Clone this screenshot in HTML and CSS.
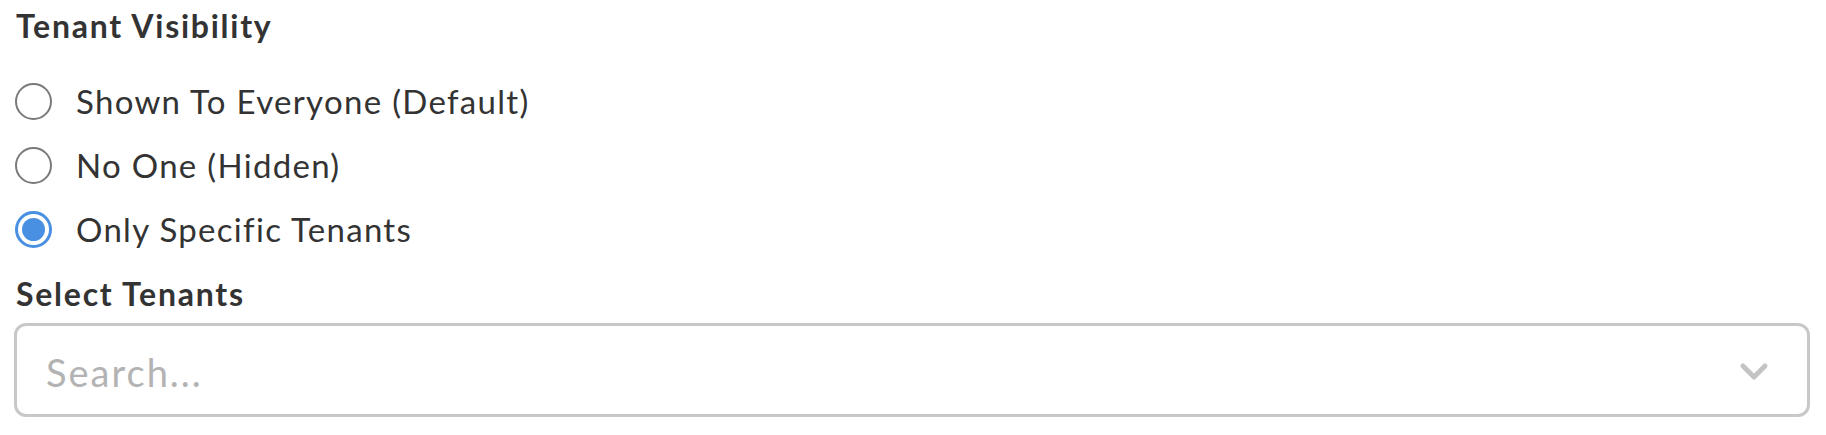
FILE: index.html
```html
<!DOCTYPE html>
<html lang="en">
	<head>
		<title>Tenant Visibility</title>
		<meta charset="UTF-8" />
		<link rel="stylesheet" href="styles.css">
	</head>
	<body>
		<div class="visibility">
			<div class="sectionTitle">Tenant Visibility</div>
			<div class="radioList">
				<label class="radioRow">
					<span class="radio"></span>
					<span class="radioLabel">Shown To Everyone (Default)</span>
				</label>
				<label class="radioRow">
					<span class="radio"></span>
					<span class="radioLabel">No One (Hidden)</span>
				</label>
				<label class="radioRow">
					<span class="radio checked"></span>
					<span class="radioLabel">Only Specific Tenants</span>
				</label>
			</div>
			<div class="sectionTitle tenantsTitle">Select Tenants</div>
			<div class="tenantSelect">
				<span class="placeholder">Search...</span>
				<svg class="chevron" width="30" height="20" viewBox="0 0 30 20">
					<polyline points="4,4 15,15 26,4" fill="none" stroke="#c4c4c4" stroke-width="5" stroke-linecap="round" stroke-linejoin="round" />
				</svg>
			</div>
		</div>
	</body>
</html>
```

FILE: styles.css
```css
html, body {
	margin: 0px;
	padding: 0px;
	background: #ffffff;
	color: #333333;
	font-family: Lato, "Open Sans", sans-serif;
}
.visibility {
	padding: 6px 16px 0px 14px;
}
.sectionTitle {
	font-size: 32px;
	font-weight: bold;
	letter-spacing: 1.75px;
	line-height: 40px;
	padding-left: 2px;
}
.radioList {
	display: flex;
	flex-direction: column;
	padding-top: 23px;
}
.radioRow {
	display: flex;
	align-items: center;
	height: 64px;
}
.radio {
	box-sizing: border-box;
	width: 37px;
	height: 37px;
	margin-left: 1px;
	border: 2px solid #7a7a7a;
	border-radius: 50%;
	display: flex;
	align-items: center;
	justify-content: center;
}
.radio.checked {
	border: 3px solid #4a90e2;
}
.radio.checked::after {
	content: "";
	width: 23px;
	height: 23px;
	border-radius: 50%;
	background: #4a90e2;
}
.radioLabel {
	font-size: 33px;
	letter-spacing: 1.3px;
	margin-left: 24px;
}
.tenantsTitle {
	margin-top: 13px;
}
.tenantSelect {
	box-sizing: border-box;
	height: 94px;
	margin-top: 9px;
	border: 3px solid #c8c8c8;
	border-radius: 12px;
	display: flex;
	align-items: center;
	justify-content: space-between;
	padding: 4px 38px 0px 29px;
}
.placeholder {
	font-size: 38px;
	letter-spacing: 2px;
	color: #b3b3b3;
}
```
